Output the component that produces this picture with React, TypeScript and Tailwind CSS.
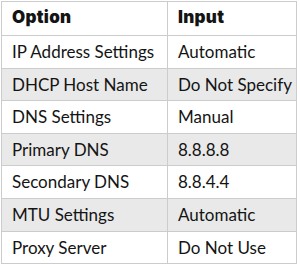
import React from "react";

const rows: [string, string][] = [
  ["IP Address Settings", "Automatic"],
  ["DHCP Host Name", "Do Not Specify"],
  ["DNS Settings", "Manual"],
  ["Primary DNS", "8.8.8.8"],
  ["Secondary DNS", "8.8.4.4"],
  ["MTU Settings", "Automatic"],
  ["Proxy Server", "Do Not Use"],
];

export default function App() {
  return (
    <div className="w-[300px] h-[268px] bg-white pt-px pl-px" style={{ fontFamily: "Lato, 'Liberation Sans', sans-serif" }}>
      <table className="border-collapse w-[296px] text-[17px] text-[#141414]">
        <thead>
          <tr className="h-[34px]">
            <th className="border border-[#cccccc] text-left font-black pl-[10px] w-[166px] font-['Inter',sans-serif] tracking-[0.3px] pb-[1px]">Option</th>
            <th className="border border-[#cccccc] text-left font-black pl-[10px] font-['Inter',sans-serif] tracking-[0.3px] pb-[1px]">Input</th>
          </tr>
        </thead>
        <tbody>
          {rows.map(([a, b], i) => (
            <tr key={a} className={`h-[32.6px] ${i % 2 === 1 ? "bg-[#e9e9e9]" : "bg-white"}`}>
              <td className="border border-[#cccccc] pl-[10px]">{a}</td>
              <td className="border border-[#cccccc] pl-[10px]">{b}</td>
            </tr>
          ))}
        </tbody>
      </table>
    </div>
  );
}
